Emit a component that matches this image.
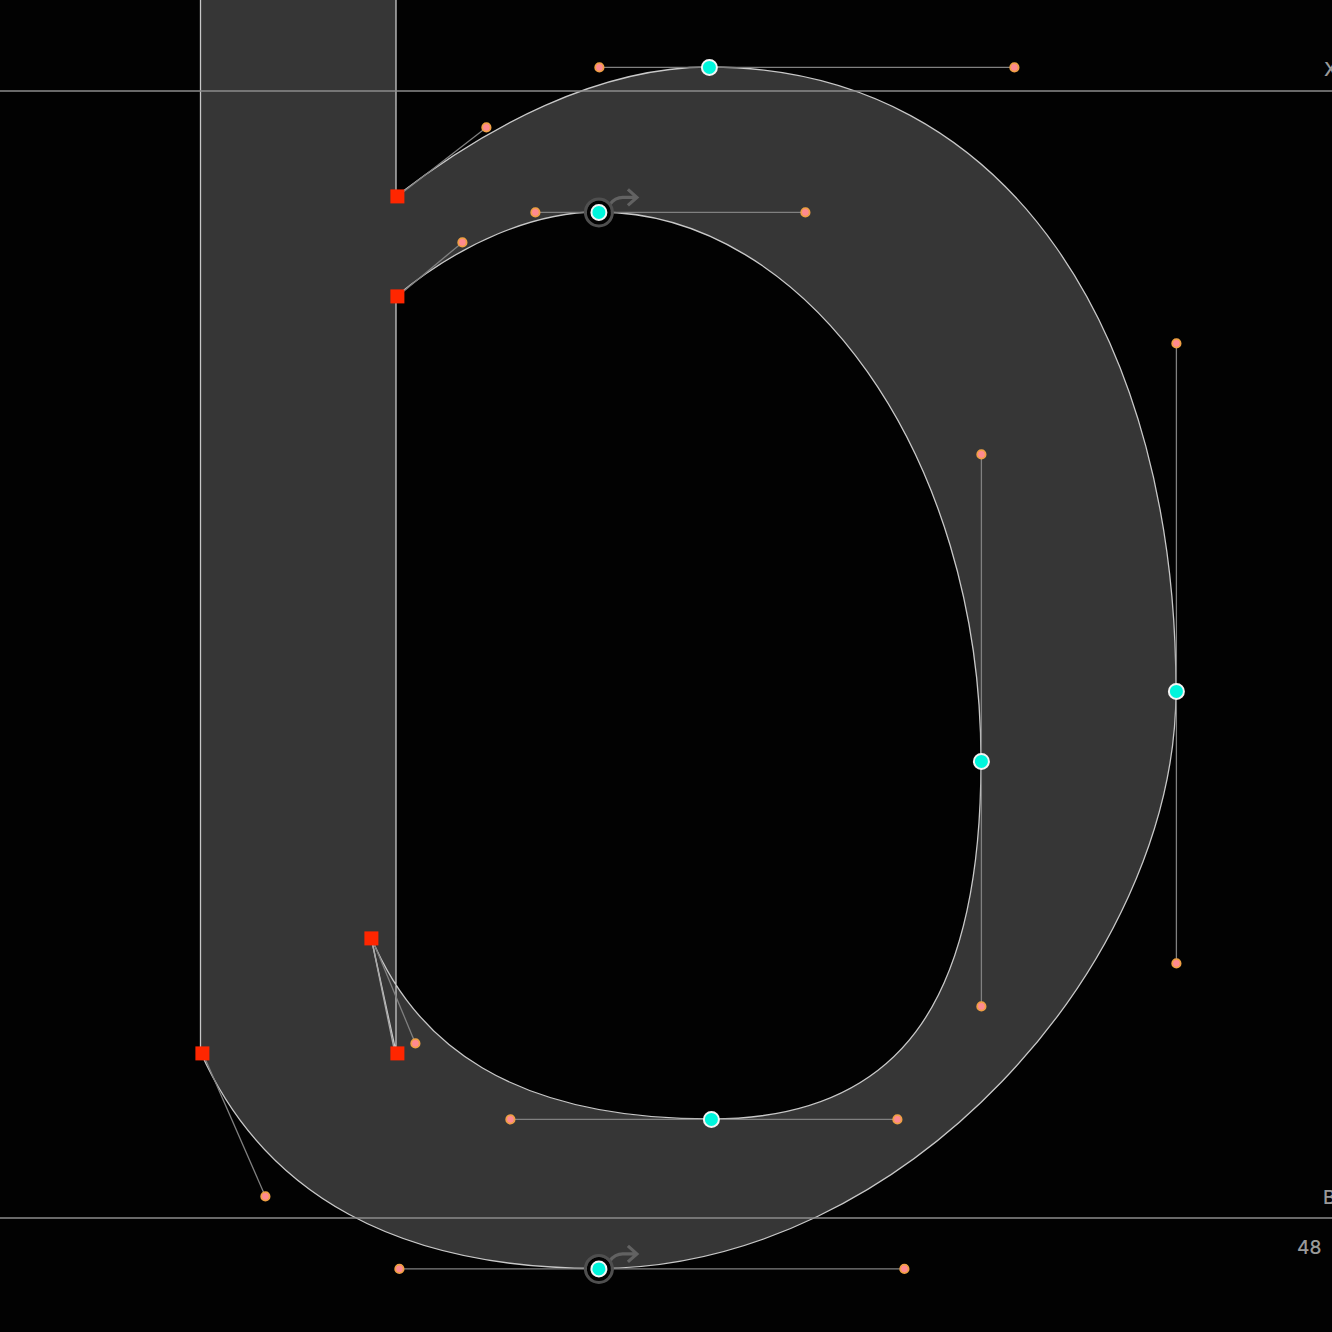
const glyph =
  'M200.5 -2 L200.5 1052 C265 1196 399 1268.5 598 1268.5 C904 1268.5 1176 963 1176 691 C1176 343 1014 67 709 67 C598 67 486 127 396.5 196 L396 196 L396 -2 Z ' +
  'M396.5 296 C462 242 535 212 598 212 C805 212 981 454 981 761 C981 1006 897 1119 711 1119 C510 1119 415 1043 371 937 L396 1052 L396 296 Z';

const handles = [
  [599, 67, 1014, 67],
  [486, 127, 397, 196],
  [535, 212, 805, 212],
  [462, 242, 397, 296],
  [981, 454, 981, 1006],
  [1176, 343, 1176, 963],
  [510, 1119, 897, 1119],
  [415, 1043, 371, 937],
  [265, 1196, 202, 1052],
  [399, 1268.5, 904, 1268.5],
];

const offCurve = [
  [599, 67],
  [1014, 67],
  [486, 127],
  [535, 212],
  [805, 212],
  [462, 242],
  [981, 454],
  [981, 1006],
  [1176, 343],
  [1176, 963],
  [510, 1119],
  [897, 1119],
  [415, 1043],
  [265, 1196],
  [399, 1268.5],
  [904, 1268.5],
];

const corners = [
  [397, 196],
  [397, 296],
  [371, 938],
  [202, 1053],
  [397, 1053],
];

const smooth = [
  [709, 67],
  [1176, 691],
  [981, 761],
  [711, 1119],
];

// start nodes get a ring and a direction arrow
const starts = [
  [598.5, 212],
  [598.5, 1268.5],
];

export default function App() {
  return (
    <div className="relative h-[1332px] w-[1332px] overflow-hidden bg-[#020202] font-['Inter',sans-serif]">
      <svg width="1332" height="1332" viewBox="0 0 1332 1332" className="block">
        <path d={glyph} fill="#363636" stroke="#c8c8c8" strokeWidth="1.3" />
        <line x1="0" y1="91" x2="1332" y2="91" stroke="#8c8c8c" strokeWidth="1.3" />
        <line x1="0" y1="1218" x2="1332" y2="1218" stroke="#8c8c8c" strokeWidth="1.3" />

        <g transform="translate(0.4 0.4)">
          {handles.map(([x1, y1, x2, y2], i) => (
            <line key={i} x1={x1} y1={y1} x2={x2} y2={y2} stroke="#808080" strokeWidth="1.3" />
          ))}
          <line x1="371" y1="938" x2="394" y2="1050" stroke="#a8a8a8" strokeWidth="1.4" />

          {starts.map(([x, y], i) => (
            <g key={i}>
              <path
                d={`M${x + 11} ${y - 8} Q${x + 16} ${y - 15} ${x + 24} ${y - 15} L${x + 38} ${y - 15} M${x + 29} ${y - 23} L${x + 38} ${y - 15} L${x + 29} ${y - 7}`}
                fill="none"
                stroke="#626262"
                strokeWidth="3.2"
              />
              <circle cx={x} cy={y} r="12" fill="#020202" />
              <circle cx={x} cy={y} r="13.5" fill="none" stroke="#4f4f4f" strokeWidth="3" />
            </g>
          ))}

          {offCurve.map(([x, y], i) => (
            <circle key={i} cx={x} cy={y} r="4.2" fill="#ff8a90" stroke="#f0a044" strokeWidth="1.8" />
          ))}
          {corners.map(([x, y], i) => (
            <rect key={i} x={x - 7} y={y - 7} width="14" height="14" fill="#ff2600" />
          ))}
          {[...smooth, ...starts].map(([x, y], i) => (
            <circle key={i} cx={x} cy={y} r="7.5" fill="#00f5dc" stroke="#f4f4f4" strokeWidth="2" />
          ))}
        </g>
      </svg>

      {/* metric labels, cut off by the right edge */}
      <span className="absolute left-[1324px] top-[58px] text-[19px] leading-6 font-medium text-[#999999]">X</span>
      <span className="absolute left-[1323px] top-[1186px] text-[19px] leading-6 font-medium text-[#999999]">B</span>
      <span className="absolute left-[1297px] top-[1236px] text-[19px] leading-6 font-medium text-[#9a9a9a]">48</span>
    </div>
  );
}
